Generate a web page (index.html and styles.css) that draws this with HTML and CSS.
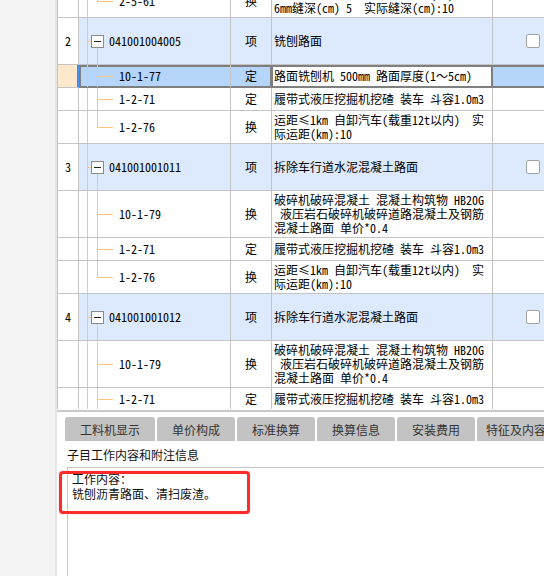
FILE: index.html
```html
<!DOCTYPE html>
<html lang="zh-CN">
<head>
<meta charset="utf-8">
<title>子目工作内容</title>
<link rel="stylesheet" href="styles.css">
</head>
<body>
<div class="page">
  <aside class="side"></aside>
  <main class="main">
    <div class="grid-view">
      <div class="table">
        <div class="row h33">
          <div class="c num"></div>
          <div class="c code last"><span class="trunk"></span><span class="br"><span class="up"></span><span class="dn"></span></span><span class="t">2-5-61</span></div>
          <div class="c type">换</div>
          <div class="c desc"><span class="ln">锯缝机锯缝 混凝土路面 缝宽(mm)</span><span class="ln">6mm缝深(cm) 5  实际缝深(cm):10</span></div>
          <div class="c chk"></div>
        </div>
        <div class="row h47 hi">
          <div class="c num">2</div>
          <div class="c code parent"><span class="trunk"></span><span class="hl"></span><span class="tg"><span class="sp"></span><span class="tog"></span><span class="dn"></span></span><span class="t">041001004005</span></div>
          <div class="c type">项</div>
          <div class="c desc"><span class="ln">铣刨路面</span></div>
          <div class="c chk"><span class="box"></span></div>
        </div>
        <div class="row h23 sel">
          <div class="c num"></div>
          <div class="c code"><span class="trunk"></span><span class="br"><span class="up"></span><span class="dn"></span></span><span class="t">10-1-77</span></div>
          <div class="c type">定</div>
          <div class="c desc"><span class="ln">路面铣刨机 500mm 路面厚度(1～5cm)</span></div>
          <div class="c chk"></div>
        </div>
        <div class="row h23">
          <div class="c num"></div>
          <div class="c code"><span class="trunk"></span><span class="br"><span class="up"></span><span class="dn"></span></span><span class="t">1-2-71</span></div>
          <div class="c type">定</div>
          <div class="c desc"><span class="ln">履带式液压挖掘机挖碴 装车 斗容1.0m3</span></div>
          <div class="c chk"></div>
        </div>
        <div class="row h33">
          <div class="c num"></div>
          <div class="c code last"><span class="trunk"></span><span class="br"><span class="up"></span><span class="dn"></span></span><span class="t">1-2-76</span></div>
          <div class="c type">换</div>
          <div class="c desc"><span class="ln">运距≤1km 自卸汽车(载重12t以内)  实</span><span class="ln">际运距(km):10</span></div>
          <div class="c chk"></div>
        </div>
        <div class="row h47 hi">
          <div class="c num">3</div>
          <div class="c code parent"><span class="trunk"></span><span class="hl"></span><span class="tg"><span class="sp"></span><span class="tog"></span><span class="dn"></span></span><span class="t">041001001011</span></div>
          <div class="c type">项</div>
          <div class="c desc"><span class="ln">拆除车行道水泥混凝土路面</span></div>
          <div class="c chk"><span class="box"></span></div>
        </div>
        <div class="row h47">
          <div class="c num"></div>
          <div class="c code"><span class="trunk"></span><span class="br"><span class="up"></span><span class="dn"></span></span><span class="t">10-1-79</span></div>
          <div class="c type">换</div>
          <div class="c desc"><span class="ln">破碎机破碎混凝土 混凝土构筑物 HB20G</span><span class="ln"> 液压岩石破碎机破碎道路混凝土及钢筋</span><span class="ln">混凝土路面 单价*0.4</span></div>
          <div class="c chk"></div>
        </div>
        <div class="row h23">
          <div class="c num"></div>
          <div class="c code"><span class="trunk"></span><span class="br"><span class="up"></span><span class="dn"></span></span><span class="t">1-2-71</span></div>
          <div class="c type">定</div>
          <div class="c desc"><span class="ln">履带式液压挖掘机挖碴 装车 斗容1.0m3</span></div>
          <div class="c chk"></div>
        </div>
        <div class="row h33">
          <div class="c num"></div>
          <div class="c code last"><span class="trunk"></span><span class="br"><span class="up"></span><span class="dn"></span></span><span class="t">1-2-76</span></div>
          <div class="c type">换</div>
          <div class="c desc"><span class="ln">运距≤1km 自卸汽车(载重12t以内)  实</span><span class="ln">际运距(km):10</span></div>
          <div class="c chk"></div>
        </div>
        <div class="row h47 hi">
          <div class="c num">4</div>
          <div class="c code parent"><span class="trunk"></span><span class="hl"></span><span class="tg"><span class="sp"></span><span class="tog"></span><span class="dn"></span></span><span class="t">041001001012</span></div>
          <div class="c type">项</div>
          <div class="c desc"><span class="ln">拆除车行道水泥混凝土路面</span></div>
          <div class="c chk"><span class="box"></span></div>
        </div>
        <div class="row h47">
          <div class="c num"></div>
          <div class="c code"><span class="trunk"></span><span class="br"><span class="up"></span><span class="dn"></span></span><span class="t">10-1-79</span></div>
          <div class="c type">换</div>
          <div class="c desc"><span class="ln">破碎机破碎混凝土 混凝土构筑物 HB20G</span><span class="ln"> 液压岩石破碎机破碎道路混凝土及钢筋</span><span class="ln">混凝土路面 单价*0.4</span></div>
          <div class="c chk"></div>
        </div>
        <div class="row h23">
          <div class="c num"></div>
          <div class="c code"><span class="trunk"></span><span class="br"><span class="up"></span><span class="dn"></span></span><span class="t">1-2-71</span></div>
          <div class="c type">定</div>
          <div class="c desc"><span class="ln">履带式液压挖掘机挖碴 装车 斗容1.0m3</span></div>
          <div class="c chk"></div>
        </div>
      </div>
    </div>
    <div class="split"></div>
    <div class="tabs">
      <div class="tab wide">工料机显示</div>
      <div class="tab">单价构成</div>
      <div class="tab">标准换算</div>
      <div class="tab">换算信息</div>
      <div class="tab">安装费用</div>
      <div class="tab">特征及内容</div>
    </div>
    <div class="caption">子目工作内容和附注信息</div>
    <div class="note">
      <p>工作内容：</p>
      <p>铣刨沥青路面、清扫废渣。</p>
    </div>
  </main>
  <div class="mark"></div>
</div>
</body>
</html>
```

FILE: styles.css
```css
* { box-sizing: border-box; margin: 0; padding: 0; }
html, body { height: 100%; }
body {
  background: #f3f3f3;
  font-family: "Noto Sans CJK SC", sans-serif;
  overflow: hidden;
}
.page { position: relative; display: flex; height: 576px; }
.side {
  width: 57px;
  flex: none;
  background: #f3f3f3;
  border-right: 2px solid #e6e6e6;
}
.main {
  flex: 1;
  min-width: 0;
  display: flex;
  flex-direction: column;
  background: #fff;
  overflow: hidden;
}
.grid-view { height: 409px; flex: none; overflow: hidden; }
.table {
  width: 520px;
  margin-top: -15px;
  border-left: 1px solid #c4c4c4;
  font: 12px/14px "Noto Sans Mono CJK SC", "Noto Sans CJK SC", monospace;
  color: #000;
}
.row { display: grid; grid-template-columns: 21px 152px 41px 221px 85px; }
.h23 { height: 23px; }
.h33 { height: 33px; }
.h47 { height: 47px; }
.c {
  display: flex;
  align-items: center;
  overflow: hidden;
  border-right: 1px solid #c4c4c4;
  border-bottom: 1px solid #c4c4c4;
}
.num, .type { justify-content: center; }
.desc {
  padding-left: 2px;
  flex-direction: column;
  align-items: flex-start;
  justify-content: center;
}
.ln { display: block; white-space: pre; }
.chk { padding-left: 33px; }
.box {
  width: 14px;
  height: 14px;
  border: 1px solid #a2a2a2;
  border-radius: 2px;
  background: #fff;
}

/* tree lines */
.code { --tl: #fdc47c; align-items: stretch; }
.trunk { flex: none; margin-left: 8px; width: 10px; border-left: 1px solid var(--tl); }
.parent .trunk { width: 1px; }
.br { flex: none; width: 16px; display: flex; flex-direction: column; }
.br .up { flex: 1; border-left: 1px solid var(--tl); border-bottom: 1px solid var(--tl); }
.br .dn { flex: 1; border-left: 1px solid var(--tl); }
.last .br .dn { border-left-color: transparent; }
.code .t { align-self: center; margin-left: 6px; white-space: nowrap; }
.parent .t { margin-left: 5px; }
.hl { flex: none; align-self: center; width: 3px; height: 1px; background: var(--tl); }
.tg { flex: none; width: 13px; display: flex; flex-direction: column; }
.tg .sp { flex: 1; }
.tg .dn { flex: 1; margin-left: 6px; border-left: 1px solid var(--tl); }
.tog {
  flex: none;
  width: 13px;
  height: 13px;
  border: 1px solid #8a8a8a;
  background: #fff;
  display: flex;
  align-items: center;
  justify-content: center;
}
.tog::before { content: ""; width: 7px; height: 1px; background: #222; }

/* highlighted parent rows */
.hi .code, .hi .type, .hi .desc, .hi .chk { background-color: #dde9fc; }

/* selected row */
.sel .num { background: #fee8cb; border-right-color: #3d8ef5; box-shadow: inset -1px 0 #3d8ef5; }
.sel .code, .sel .type, .sel .desc, .sel .chk { border-bottom-color: #7f7f7f; }
.sel .code {
  background-color: #b5d5fb;
  box-shadow: inset 2px 0 #7f7f7f, inset 0 2px #7f7f7f, inset 0 -1px #7f7f7f;
}
.sel .type {
  background-color: #b5d5fb;
  border-right-color: #7f7f7f;
  box-shadow: inset -1px 0 #7f7f7f, inset 0 2px #7f7f7f, inset 0 -1px #7f7f7f;
}
.sel .desc {
  background: #fff;
  border-right-color: #7f7f7f;
  box-shadow: inset 1px 0 #7f7f7f, inset -1px 0 #7f7f7f, inset 0 2px #7f7f7f, inset 0 -1px #7f7f7f;
}
.sel .chk {
  background: #b5d5fb;
  box-shadow: inset 0 2px #7f7f7f, inset 0 -1px #7f7f7f;
}

/* bottom panel */
.split { flex: none; height: 2px; margin-top: 1px; background: #c8c8c8; }
.tabs {
  flex: none;
  display: flex;
  gap: 2px;
  padding: 5px 0 0 8px;
  white-space: nowrap;
}
.tab {
  flex: none;
  width: 78px;
  height: 24px;
  background: #c3c3c3;
  border-radius: 3px 3px 0 0;
  font-size: 12px;
  color: #333;
  display: flex;
  align-items: center;
  justify-content: center;
}
.tab.wide { width: 90px; }
.caption {
  flex: none;
  height: 26px;
  line-height: 28px;
  padding-left: 10px;
  font-size: 12px;
  color: #111;
}
.note {
  flex: 1;
  margin-left: 10px;
  border-top: 1px solid #c8c8c8;
  border-left: 1px solid #c8c8c8;
  padding: 3px 0 0 4px;
  font-size: 12px;
  line-height: 15px;
  color: #111;
}
.mark {
  position: absolute;
  left: 59px;
  top: 471px;
  width: 191px;
  height: 43px;
  border: 3px solid #ff2b2b;
  border-radius: 4px;
  box-shadow: 0 0 1px rgba(255, 0, 0, 0.5);
}
```
